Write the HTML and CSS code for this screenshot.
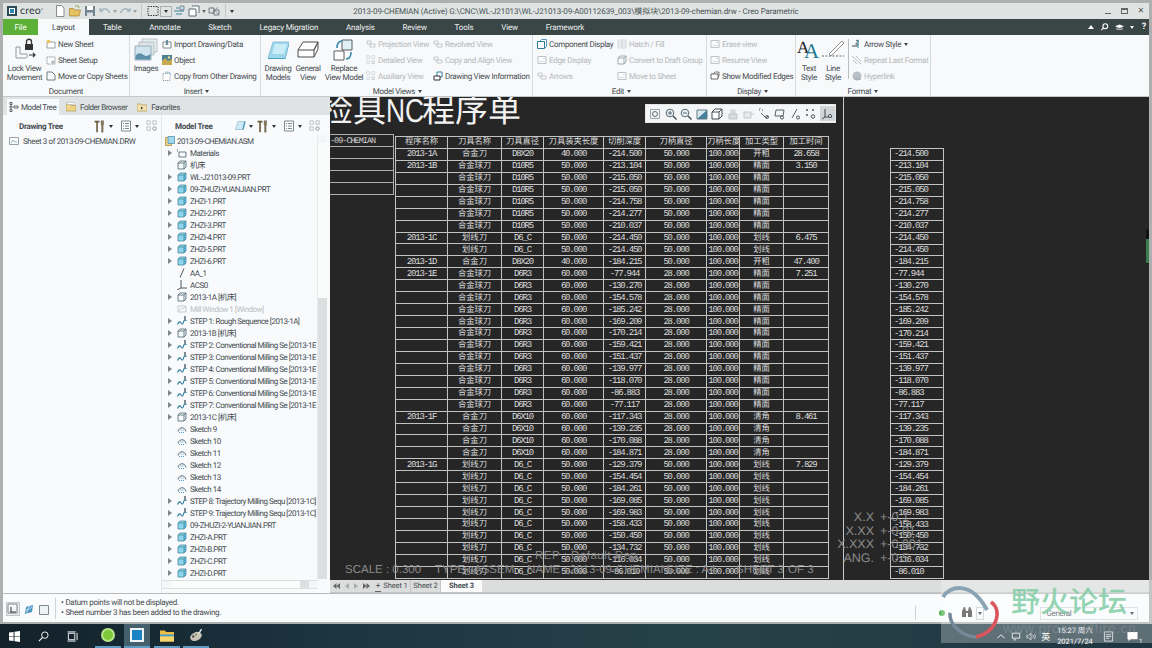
FILE: index.html
```html
<!DOCTYPE html>
<html>
<head>
    <meta charset="UTF-8">
    <meta name="viewport" content="width=device-width, initial-scale=1.0">
    <title>Creo Parametric</title>
    <link rel="stylesheet" href="styles.css">
</head>
<body>
    <svg class="icon-defs" width="0" height="0">
        <symbol id="part" viewBox="0 0 10 10"><path d="M1 3 3 1h6v6L7 9H1z" fill="#8ed4e8" stroke="#4a8ba5" stroke-width=".8"/><path d="M1 3h6v6M7 3l2-2" fill="none" stroke="#3f7f99" stroke-width=".7"/><path d="M7 3.4 8.7 1.8v5L7 8.4z" fill="#4fa6c6"/></symbol>
        <symbol id="box" viewBox="0 0 10 10"><path d="M1 3 3 1h6v6L7 9H1zM1 3h6v6M7 3l2-2" fill="#f7fbfc" stroke="#44606b" stroke-width=".8"/></symbol>
        <symbol id="step" viewBox="0 0 10 10"><path d="M.5 8.5C2 5 3 5.5 4 7s2 1.500 2.500-1 1.500-2 3-1.500" fill="none" stroke="#2f7d9d" stroke-width="1.100"/><path d="M7 0h2v3.500l-1 1-1-1z" fill="#7d8c92"/></symbol>
        <symbol id="sketch" viewBox="0 0 10 10"><path d="M1 7.500C2 2.500 8 2.500 9 7.500" fill="none" stroke="#44606b" stroke-width=".9"/><path d="M2 8.500h6M3.500 6h3" stroke="#3f93b5" stroke-width=".9" stroke-dasharray="1 1"/></symbol>
        <symbol id="tool" viewBox="0 0 16 16"><path d="M2 1h6v2H6v12H4V3H2z" fill="#6b5b3a"/><path d="M10 1h3v5l-.6 1v8h-1.800V7L10 6z" fill="#8a7a4f" stroke="#4c4c4c" stroke-width=".5"/></symbol>
        <symbol id="list" viewBox="0 0 12 12"><path d="M1.500 1h9v10h-9z" fill="#fff" stroke="#7c8a90"/><path d="M3 3.500h1M5 3.500h4M3 6h1M5 6h4M3 8.500h1M5 8.500h4" stroke="#7c8a90"/></symbol>
        <symbol id="show" viewBox="0 0 14 14"><path d="M1 1h4v4H1zM8 1h4v4H8zM1 8h4v4H1z" fill="none" stroke="#b5bbbf"/><circle cx="10" cy="10" r="2" fill="none" stroke="#7f8a90"/></symbol>
        <symbol id="sheet" viewBox="0 0 10 10"><path d="M1 1.500h8v7H1z" fill="#fff" stroke="#7d8a90" stroke-width=".8"/><path d="M2.500 6.500h5M6 3.500h2" stroke="#a8b2b6" stroke-width=".7"/></symbol>
        <symbol id="view" viewBox="0 0 10 10"><path d="M1 2h4v3H1zM4 5h5v3H4z" fill="none" stroke="#8d979c" stroke-width=".8"/></symbol>
    </svg>

    <div class="window">
        <header class="titlebar">
            <div class="qat">
                <div class="creo-logo"><span class="creo-square"></span><span>creo</span><sup>°</sup></div>
                <svg class="qat-ico" viewBox="0 0 10 12"><path d="M1.500 .500h5l2.500 2.500v8.500h-7.500z" fill="#fff" stroke="#8c8c8c"/></svg>
                <svg class="qat-ico" viewBox="0 0 12 12"><path d="M.5 3.500h4l1 1.500h6l-1.500 6H.5z" fill="#e8c260" stroke="#a5832f" stroke-width=".7"/><path d="M6 1.500 9 .5l1 2.500" fill="none" stroke="#9aa55f"/></svg>
                <svg class="qat-ico" viewBox="0 0 12 12"><path d="M1 1h10v10H1z" fill="#71838c"/><path d="M3 1h6v4H3z" fill="#fff"/><path d="M3 7.500h6V11H3z" fill="#d9dfe2"/></svg>
                <svg class="qat-ico dim" viewBox="0 0 12 12"><path d="M1 3v3h3M1.500 6C4 2.500 9 3 10.500 8" fill="none" stroke="#6f8ca0" stroke-width="1.300"/></svg>
                <span class="mini-caret dim"></span>
                <svg class="qat-ico dim" viewBox="0 0 12 12"><path d="M11 3v3H8M10.500 6C8 2.500 3 3 1.500 8" fill="none" stroke="#6f8ca0" stroke-width="1.300"/></svg>
                <span class="mini-caret dim"></span>
                <span class="qat-sep"></span>
                <svg class="qat-ico" viewBox="0 0 12 12"><path d="M1 1.500h10v9H1z" fill="none" stroke="#3d3d3d" stroke-dasharray="1.500 1"/></svg>
                <span class="mini-caret boxed"></span>
                <svg class="qat-ico" viewBox="0 0 12 12"><path d="M1 6h10M3 9h6M3 3h3" stroke="#3a7f9b" stroke-width="1.200"/><path d="M7 1h4v4H7z" fill="#c2dbe5" stroke="#4a5a62" stroke-width=".6"/></svg>
                <svg class="qat-ico" viewBox="0 0 12 12"><path d="M1 4h7v7H1zM4 1h7v7" fill="#fff" stroke="#5c6a70"/></svg>
                <span class="mini-caret"></span>
                <svg class="qat-ico" viewBox="0 0 12 12"><path d="M1 3h5v5H1zM6 5h5v5H6z" fill="none" stroke="#737d82"/><path d="m4 2 6 7M10 2 4 9" stroke="#737d82" stroke-width=".7"/></svg>
                <span class="qat-sep"></span>
                <span class="mini-caret dark"></span>
            </div>
            <div class="doc-title">2013-09-CHEMIAN (Active) G:\CNC\WL-J21013\WL-J21013-09-A00112639_003\模拟块\2013-09-chemian.drw - Creo Parametric</div>
            <div class="win-controls">
                <span class="win-min"></span>
                <span class="win-max"></span>
                <span class="win-close">✕</span>
            </div>
        </header>

        <nav class="ribbon-tabs">
            <a class="tab tab-file">File</a>
            <a class="tab tab-active">Layout</a>
            <a class="tab">Table</a>
            <a class="tab">Annotate</a>
            <a class="tab">Sketch</a>
            <a class="tab">Legacy Migration</a>
            <a class="tab">Analysis</a>
            <a class="tab">Review</a>
            <a class="tab">Tools</a>
            <a class="tab">View</a>
            <a class="tab">Framework</a>
            <div class="tab-tools">
                <span class="up-arrow"></span>
                <svg class="tab-tool" viewBox="0 0 10 10"><circle cx="6" cy="4" r="3" fill="none" stroke="#fff" stroke-width="1.400"/><path d="M4 6 1 9" stroke="#fff" stroke-width="1.400"/></svg>
                <svg class="tab-tool" viewBox="0 0 12 10"><path d="M0 4 6 1.500 12 4 6 6.500z" fill="#fff"/><path d="M2.500 6v2h7V6" fill="none" stroke="#fff"/></svg>
                <span class="mini-caret light"></span>
                <span class="tab-help">?</span>
            </div>
        </nav>

        <section class="ribbon">
            <div class="group group-doc">
                <div class="group-body">
                    <div class="big-btn lock-btn">
                        <svg class="big-ico" viewBox="0 0 24 24"><path d="M3 9v11h10" fill="none" stroke="#8f9aa0"/><path d="M3 9h4v7h7v4" fill="none" stroke="#8f9aa0"/><rect x="12" y="6" width="8" height="6" fill="#333"/><path d="M13.500 6V3.500c0-3 5-3 5 0V6" fill="none" stroke="#333" stroke-width="1.300"/><path d="M16 17h6m-2-2 2 2-2 2" fill="none" stroke="#333" stroke-width="1.200"/></svg>
                        <span>Lock View<br>Movement</span>
                    </div>
                    <ul class="col col-doc">
                        <li><svg class="ico" viewBox="0 0 10 10"><path d="M1 3h8v6H1z" fill="#fff" stroke="#7d8a90" stroke-width=".8"/><circle cx="2.500" cy="2.500" r="1.800" fill="#ebc250"/></svg>New Sheet</li>
                        <li><svg class="ico" viewBox="0 0 10 10"><path d="M1 2h8v7H1z" fill="#fff" stroke="#7d8a90" stroke-width=".8" stroke-dasharray="1.500 .6"/><circle cx="7" cy="7" r="1.600" fill="#aab4b8"/></svg>Sheet Setup</li>
                        <li><svg class="ico" viewBox="0 0 10 10"><path d="M1 1h5l3 3v5H1z" fill="#fff" stroke="#5e6d74" stroke-width=".9"/></svg>Move or Copy Sheets</li>
                    </ul>
                </div>
                <div class="group-label">Document</div>
            </div>

            <div class="group group-insert">
                <div class="group-body">
                    <div class="big-btn images-btn">
                        <svg class="big-ico" viewBox="0 0 24 24"><path d="M8 1h15v13H8z" fill="#e8edf0" stroke="#aeb8bd" stroke-width=".8"/><path d="M5 4h15v13H5z" fill="#dde4e8" stroke="#aeb8bd" stroke-width=".8"/><path d="M1 8h16v14H1z" fill="#cfe4ee" stroke="#8ea0a9" stroke-width=".8"/><path d="M1.500 17.500c4-4 6-2 9 0 2 1 4 0 6-1.500v5.500h-15z" fill="#5d8fa8"/></svg>
                        <span>Images</span>
                    </div>
                    <ul class="col col-insert">
                        <li><svg class="ico" viewBox="0 0 10 10"><path d="M1 3h8v6H1z" fill="#fff" stroke="#5e6d74" stroke-width=".8"/><path d="M4 1h2v4H4zM3 6l2-2 2 2" fill="#6b8d9b"/></svg>Import Drawing/Data</li>
                        <li><svg class="ico" viewBox="0 0 10 10"><path d="M0 0h10v10H0z" fill="#4b7f96"/><path d="M0 10V6l3-3 3 3 4-2v6z" fill="#c7a94e"/><circle cx="7" cy="2.500" r="1.300" fill="#e5d98a"/></svg>Object</li>
                        <li><svg class="ico" viewBox="0 0 10 10"><path d="M1 2.500h7v7H1z" fill="#fff" stroke="#7d8a90" stroke-width=".8" stroke-dasharray="1.200 .8"/><path d="M3 1.200h4l2 2" fill="none" stroke="#7aa9bc" stroke-width=".8"/></svg>Copy from Other Drawing</li>
                    </ul>
                </div>
                <div class="group-label">Insert<i class="caret"></i></div>
            </div>

            <div class="group group-views">
                <div class="group-body">
                    <div class="big-btn models-btn">
                        <svg class="big-ico" viewBox="0 0 24 24"><path d="M7 4h16l-4 16H2z" fill="#9ed8ec"/><path d="M2 20l5-16h16" fill="none" stroke="#7fb7cb" stroke-width=".8"/><path d="M6 16 9 6h12l-3 10z" fill="#c9edf7"/><path d="M19 20l4-16v3l-3.500 14H2v-1z" fill="#49a3c4"/></svg>
                        <span>Drawing<br>Models</span>
                    </div>
                    <div class="big-btn general-btn">
                        <svg class="big-ico" viewBox="0 0 24 24"><path d="M7 4h15l-4 8v7H2v-7zM2 12h16M18 12l4-8v7l-4 8" fill="#fdfdfd" stroke="#4d4d4d" stroke-width="1"/></svg>
                        <span>General<br>View</span>
                    </div>
                    <div class="big-btn replace-btn">
                        <svg class="big-ico" viewBox="0 0 24 24"><path d="M10 2h10v10H10z" fill="#dff1f7" stroke="#4d4d4d" stroke-width=".9"/><path d="M2 13h10v9H2z" fill="#fff" stroke="#4d4d4d" stroke-width=".9"/><path d="M5 10c0-5 2-7 5-7M19 14c0 5-2 7-5 7" fill="none" stroke="#2e88aa" stroke-width="1.600"/></svg>
                        <span>Replace<br>View Model</span>
                    </div>
                    <ul class="col col-views disabled">
                        <li><svg class="ico"><use href="#view"/></svg>Projection View</li>
                        <li><svg class="ico"><use href="#show"/></svg>Detailed View</li>
                        <li><svg class="ico"><use href="#show"/></svg>Auxiliary View</li>
                    </ul>
                    <ul class="col col-views2">
                        <li class="disabled"><svg class="ico"><use href="#view"/></svg>Revolved View</li>
                        <li class="disabled"><svg class="ico"><use href="#view"/></svg>Copy and Align View</li>
                        <li><svg class="ico" viewBox="0 0 10 10"><path d="M4 1h5v5H4z" fill="#fff" stroke="#2f7d9d"/><path d="M1 5h6v4H1z" fill="#fff" stroke="#333"/></svg>Drawing View Information</li>
                    </ul>
                </div>
                <div class="group-label">Model Views<i class="caret"></i></div>
            </div>

            <div class="group group-edit">
                <div class="group-body">
                    <ul class="col col-edit">
                        <li><svg class="ico" viewBox="0 0 10 10"><path d="M.5 2.500h7v7h-7z" fill="#fff" stroke="#2f7d9d"/><path d="M2.500 2.500l2-2h5v7l-2 2" fill="none" stroke="#2f7d9d" stroke-width=".8"/></svg>Component Display</li>
                        <li class="disabled"><svg class="ico"><use href="#sheet"/></svg>Edge Display</li>
                        <li class="disabled"><svg class="ico"><use href="#view"/></svg>Arrows</li>
                    </ul>
                    <ul class="col disabled">
                        <li><svg class="ico" viewBox="0 0 10 10"><path d="M1 1h8v8H1zM1 5h8M5 1v8M1 3h8M1 7h8" fill="none" stroke="#8d979c" stroke-width=".5"/></svg>Hatch / Fill</li>
                        <li><svg class="ico"><use href="#box"/></svg>Convert to Draft Group</li>
                        <li><svg class="ico"><use href="#sheet"/></svg>Move to Sheet</li>
                    </ul>
                </div>
                <div class="group-label">Edit<i class="caret"></i></div>
            </div>

            <div class="group group-display">
                <div class="group-body">
                    <ul class="col">
                        <li class="disabled"><svg class="ico"><use href="#sheet"/></svg>Erase view</li>
                        <li class="disabled"><svg class="ico"><use href="#sheet"/></svg>Resume View</li>
                        <li><svg class="ico" viewBox="0 0 10 10"><path d="M1 3h7v5H1z" fill="#fff" stroke="#444" stroke-width=".8"/><path d="M3 3l2-2h4v4l-1 1" fill="none" stroke="#444" stroke-width=".7"/></svg>Show Modified Edges</li>
                    </ul>
                </div>
                <div class="group-label">Display<i class="caret"></i></div>
            </div>

            <div class="group group-format">
                <div class="group-body">
                    <div class="big-btn textstyle-btn">
                        <div class="aa-ico"><span class="aa-back">A</span><span class="aa-front">A</span></div>
                        <span>Text<br>Style</span>
                    </div>
                    <div class="big-btn linestyle-btn">
                        <svg class="big-ico" viewBox="0 0 24 24"><path d="M1 18h22" stroke="#666" stroke-dasharray="2 1.500"/><path d="M8 16 21 3l2 2L10 18z" fill="#fff" stroke="#777" stroke-width=".8"/></svg>
                        <span>Line<br>Style</span>
                    </div>
                    <span class="format-sep"></span>
                    <ul class="col col-format">
                        <li><svg class="ico" viewBox="0 0 10 10"><path d="M0 7h5M4 2c2-2 3 0 1 1.500S4 7 6.500 5" fill="none" stroke="#3e4a50"/><path d="M6 1v8" stroke="#2f7d9d"/></svg>Arrow Style<i class="caret"></i></li>
                        <li class="disabled"><svg class="ico" viewBox="0 0 10 10"><path d="M0 1 9 9M4 1l5 5M1 5l4 4" stroke="#8d979c"/></svg>Repeat Last Format</li>
                        <li class="disabled"><svg class="ico" viewBox="0 0 10 10"><circle cx="5" cy="5" r="4.500" fill="#8f9aa0"/><path d="M3 8h6" stroke="#666"/></svg>Hyperlink</li>
                    </ul>
                </div>
                <div class="group-label">Format<i class="caret"></i></div>
            </div>
        </section>

        <main class="workspace">
            <aside class="side-panel">
                <div class="panel-tabs">
                    <div class="panel-tab panel-tab-active">
                        <svg class="ico" viewBox="0 0 10 10"><path d="M1 .5h2v2H1zM1 4h2v2H1zM1 7.500h2v2H1zM5 4h4v2H5z" fill="none" stroke="#444" stroke-width=".8"/></svg>Model Tree
                    </div>
                    <div class="panel-tab">
                        <svg class="ico" viewBox="0 0 10 10"><path d="M0 2h4l1 1.500h5V9H0z" fill="#eed389" stroke="#a98c3c" stroke-width=".6"/><path d="M1 .5h7v2H1z" fill="#fff" stroke="#aaa" stroke-width=".5"/></svg>Folder Browser
                    </div>
                    <div class="panel-tab">
                        <svg class="ico" viewBox="0 0 10 10"><path d="M0 2h4l1 1h5v6H0z" fill="#f1e2b0" stroke="#a98c3c" stroke-width=".6"/><path d="m4 4.500 2 1.500-2 1.500z" fill="#333"/></svg>Favorites
                    </div>
                </div>
                <div class="trees">
                    <div class="tree drawing-tree">
                        <div class="tree-head">
                            <b>Drawing Tree</b>
                            <span class="tree-tools">
                                <svg class="tool-ico"><use href="#tool"/></svg><span class="mini-caret dark"></span>
                                <svg class="list-ico"><use href="#list"/></svg><span class="mini-caret dark"></span>
                                <svg class="list-ico"><use href="#show"/></svg>
                            </span>
                        </div>
                        <div class="sheet-row">
                            <svg class="ico" viewBox="0 0 10 10"><path d="M.5 1.500h9v7h-9z" fill="#fff" stroke="#7c8a90" stroke-width=".8"/><path d="M2 7 4 4l2 2h2" fill="none" stroke="#4d97b5" stroke-width=".7"/></svg>Sheet 3 of 2013-09-CHEMIAN.DRW
                        </div>
                    </div>
                    <div class="tree model-tree">
                        <div class="tree-head">
                            <b>Model Tree</b>
                            <span class="tree-tools">
                                <svg class="list-ico" viewBox="0 0 12 12"><path d="M4 1.500h7l-2 8H1.500z" fill="#cfeaf4" stroke="#8fb9c9" stroke-width=".7"/><path d="m9 9.500 2-8" stroke="#3f9abc" stroke-width="1.300"/></svg><span class="mini-caret dark"></span>
                                <svg class="tool-ico"><use href="#tool"/></svg><span class="mini-caret dark"></span>
                                <svg class="list-ico"><use href="#list"/></svg><span class="mini-caret dark"></span>
                                <svg class="list-ico"><use href="#show"/></svg>
                            </span>
                        </div>
                        <div class="tree-scroll">
                            <ul class="tree-list">
                                <li class="root"><svg class="ti" viewBox="0 0 10 10"><path d="M.5 1.500h6v8h-6z" fill="#f0d68c" stroke="#a5853a" stroke-width=".7"/><path d="M3 .5h6.500v7H3z" fill="#9ed8ec" stroke="#4a8ba5" stroke-width=".7"/></svg>2013-09-CHEMIAN.ASM</li>
                                <li class="has-kids"><svg class="ti" viewBox="0 0 10 10"><path d="M1 1C0 2 0 3 .5 4M2 4h7v5H2z" fill="none" stroke="#44606b" stroke-width=".8"/></svg>Materials</li>
                                <li><svg class="ti"><use href="#box"/></svg>机床</li>
                                <li class="has-kids"><svg class="ti"><use href="#part"/></svg>WL-J21013-09.PRT</li>
                                <li class="has-kids"><svg class="ti"><use href="#part"/></svg>09-ZHUZI-YUANJIAN.PRT</li>
                                <li class="has-kids"><svg class="ti"><use href="#part"/></svg>ZHZI-1.PRT</li>
                                <li class="has-kids"><svg class="ti"><use href="#part"/></svg>ZHZI-2.PRT</li>
                                <li class="has-kids"><svg class="ti"><use href="#part"/></svg>ZHZI-3.PRT</li>
                                <li class="has-kids"><svg class="ti"><use href="#part"/></svg>ZHZI-4.PRT</li>
                                <li class="has-kids"><svg class="ti"><use href="#part"/></svg>ZHZI-5.PRT</li>
                                <li class="has-kids"><svg class="ti"><use href="#part"/></svg>ZHZI-6.PRT</li>
                                <li><svg class="ti" viewBox="0 0 10 10"><path d="M3 9.500 7 .5" stroke="#555"/></svg>AA_1</li>
                                <li><svg class="ti" viewBox="0 0 10 10"><path d="M4 0v8L0 10M4 8h6" fill="none" stroke="#444" stroke-width=".9"/></svg>ACS0</li>
                                <li class="has-kids"><svg class="ti"><use href="#box"/></svg>2013-1A [机床]</li>
                                <li class="muted"><svg class="ti" viewBox="0 0 10 10"><path d="M1 2h8v6H1z" fill="none" stroke="#b8c0c4" stroke-width=".8"/><path d="M2 7c2-5 3 0 6-4" fill="none" stroke="#b8c0c4" stroke-width=".8"/></svg>Mill Window 1 [Window]</li>
                                <li class="has-kids"><svg class="ti"><use href="#step"/></svg>STEP 1: Rough Sequence [2013-1A]</li>
                                <li class="has-kids"><svg class="ti"><use href="#box"/></svg>2013-1B [机床]</li>
                                <li class="has-kids"><svg class="ti"><use href="#step"/></svg>STEP 2: Conventional Milling Se [2013-1E</li>
                                <li class="has-kids"><svg class="ti"><use href="#step"/></svg>STEP 3: Conventional Milling Se [2013-1E</li>
                                <li class="has-kids"><svg class="ti"><use href="#step"/></svg>STEP 4: Conventional Milling Se [2013-1E</li>
                                <li class="has-kids"><svg class="ti"><use href="#step"/></svg>STEP 5: Conventional Milling Se [2013-1E</li>
                                <li class="has-kids"><svg class="ti"><use href="#step"/></svg>STEP 6: Conventional Milling Se [2013-1E</li>
                                <li class="has-kids"><svg class="ti"><use href="#step"/></svg>STEP 7: Conventional Milling Se [2013-1E</li>
                                <li class="has-kids"><svg class="ti"><use href="#box"/></svg>2013-1C [机床]</li>
                                <li><svg class="ti"><use href="#sketch"/></svg>Sketch 9</li>
                                <li><svg class="ti"><use href="#sketch"/></svg>Sketch 10</li>
                                <li><svg class="ti"><use href="#sketch"/></svg>Sketch 11</li>
                                <li><svg class="ti"><use href="#sketch"/></svg>Sketch 12</li>
                                <li><svg class="ti"><use href="#sketch"/></svg>Sketch 13</li>
                                <li><svg class="ti"><use href="#sketch"/></svg>Sketch 14</li>
                                <li class="has-kids"><svg class="ti"><use href="#step"/></svg>STEP 8: Trajectory Milling Sequ [2013-1C]</li>
                                <li class="has-kids"><svg class="ti"><use href="#step"/></svg>STEP 9: Trajectory Milling Sequ [2013-1C]</li>
                                <li class="has-kids"><svg class="ti"><use href="#part"/></svg>09-ZHUZI-2-YUANJIAN.PRT</li>
                                <li class="has-kids"><svg class="ti"><use href="#part"/></svg>ZHZI-A.PRT</li>
                                <li class="has-kids"><svg class="ti"><use href="#part"/></svg>ZHZI-B.PRT</li>
                                <li class="has-kids"><svg class="ti"><use href="#part"/></svg>ZHZI-C.PRT</li>
                                <li class="has-kids"><svg class="ti"><use href="#part"/></svg>ZHZI-D.PRT</li>
                            </ul>
                            <div class="vscroll"><span class="sb-up"></span><span class="sb-thumb"></span></div>
                        </div>
                        <div class="hscroll"><span class="sb-left"></span><span class="sb-track"></span><span class="sb-hthumb"></span><span class="sb-right"></span></div>
                    </div>
                </div>
            </aside>

            <div class="drawing-area">
                <div class="canvas">
                    <h1 class="sheet-title">检具<span class="title-latin">NC</span>程序单</h1>

                    <div class="name-block">
                        <div>-09-CHEMIAN</div><div></div><div></div><div></div><div></div>
                    </div>

                    <table class="cad-table tool-table">
                        <colgroup><col class="c1"><col class="c2"><col class="c3"><col class="c4"><col class="c5"><col class="c6"><col class="c7"><col class="c8"><col class="c9"></colgroup>
                        <tr class="head"><td>程序名称</td><td>刀具名称</td><td>刀具直径</td><td>刀具装夹长度</td><td>切削深度</td><td>刀柄直径</td><td>刀柄长度</td><td>加工类型</td><td>加工时间</td></tr>
                        <tr><td>2013-1A</td><td>合金刀</td><td>D8X20</td><td>40.000</td><td>-214.500</td><td>50.000</td><td>100.000</td><td>开粗</td><td>28.658</td></tr>
                        <tr><td>2013-1B</td><td>合金球刀</td><td>D10R5</td><td>50.000</td><td>-213.104</td><td>50.000</td><td>100.000</td><td>精面</td><td>3.150</td></tr>
                        <tr><td></td><td>合金球刀</td><td>D10R5</td><td>50.000</td><td>-215.050</td><td>50.000</td><td>100.000</td><td>精面</td><td></td></tr>
                        <tr><td></td><td>合金球刀</td><td>D10R5</td><td>50.000</td><td>-215.050</td><td>50.000</td><td>100.000</td><td>精面</td><td></td></tr>
                        <tr><td></td><td>合金球刀</td><td>D10R5</td><td>50.000</td><td>-214.758</td><td>50.000</td><td>100.000</td><td>精面</td><td></td></tr>
                        <tr><td></td><td>合金球刀</td><td>D10R5</td><td>50.000</td><td>-214.277</td><td>50.000</td><td>100.000</td><td>精面</td><td></td></tr>
                        <tr><td></td><td>合金球刀</td><td>D10R5</td><td>50.000</td><td>-210.037</td><td>50.000</td><td>100.000</td><td>精面</td><td></td></tr>
                        <tr><td>2013-1C</td><td>划线刀</td><td>D6_C</td><td>50.000</td><td>-214.450</td><td>50.000</td><td>100.000</td><td>划线</td><td>6.475</td></tr>
                        <tr><td></td><td>划线刀</td><td>D6_C</td><td>50.000</td><td>-214.450</td><td>50.000</td><td>100.000</td><td>划线</td><td></td></tr>
                        <tr><td>2013-1D</td><td>合金刀</td><td>D8X20</td><td>40.000</td><td>-184.215</td><td>50.000</td><td>100.000</td><td>开粗</td><td>47.400</td></tr>
                        <tr><td>2013-1E</td><td>合金球刀</td><td>D6R3</td><td>60.000</td><td>-77.944</td><td>28.000</td><td>100.000</td><td>精面</td><td>7.251</td></tr>
                        <tr><td></td><td>合金球刀</td><td>D6R3</td><td>60.000</td><td>-130.270</td><td>28.000</td><td>100.000</td><td>精面</td><td></td></tr>
                        <tr><td></td><td>合金球刀</td><td>D6R3</td><td>60.000</td><td>-154.578</td><td>28.000</td><td>100.000</td><td>精面</td><td></td></tr>
                        <tr><td></td><td>合金球刀</td><td>D6R3</td><td>60.000</td><td>-185.242</td><td>28.000</td><td>100.000</td><td>精面</td><td></td></tr>
                        <tr><td></td><td>合金球刀</td><td>D6R3</td><td>60.000</td><td>-169.209</td><td>28.000</td><td>100.000</td><td>精面</td><td></td></tr>
                        <tr><td></td><td>合金球刀</td><td>D6R3</td><td>60.000</td><td>-170.214</td><td>28.000</td><td>100.000</td><td>精面</td><td></td></tr>
                        <tr><td></td><td>合金球刀</td><td>D6R3</td><td>60.000</td><td>-159.421</td><td>28.000</td><td>100.000</td><td>精面</td><td></td></tr>
                        <tr><td></td><td>合金球刀</td><td>D6R3</td><td>60.000</td><td>-151.437</td><td>28.000</td><td>100.000</td><td>精面</td><td></td></tr>
                        <tr><td></td><td>合金球刀</td><td>D6R3</td><td>60.000</td><td>-139.977</td><td>28.000</td><td>100.000</td><td>精面</td><td></td></tr>
                        <tr><td></td><td>合金球刀</td><td>D6R3</td><td>60.000</td><td>-118.070</td><td>28.000</td><td>100.000</td><td>精面</td><td></td></tr>
                        <tr><td></td><td>合金球刀</td><td>D6R3</td><td>60.000</td><td>-86.883</td><td>28.000</td><td>100.000</td><td>精面</td><td></td></tr>
                        <tr><td></td><td>合金球刀</td><td>D6R3</td><td>60.000</td><td>-77.117</td><td>28.000</td><td>100.000</td><td>精面</td><td></td></tr>
                        <tr><td>2013-1F</td><td>合金刀</td><td>D6X10</td><td>60.000</td><td>-117.343</td><td>28.000</td><td>100.000</td><td>清角</td><td>8.461</td></tr>
                        <tr><td></td><td>合金刀</td><td>D6X10</td><td>60.000</td><td>-139.235</td><td>28.000</td><td>100.000</td><td>清角</td><td></td></tr>
                        <tr><td></td><td>合金刀</td><td>D6X10</td><td>60.000</td><td>-170.088</td><td>28.000</td><td>100.000</td><td>清角</td><td></td></tr>
                        <tr><td></td><td>合金刀</td><td>D6X10</td><td>60.000</td><td>-184.871</td><td>28.000</td><td>100.000</td><td>清角</td><td></td></tr>
                        <tr><td>2013-1G</td><td>划线刀</td><td>D6_C</td><td>50.000</td><td>-129.379</td><td>50.000</td><td>100.000</td><td>划线</td><td>7.829</td></tr>
                        <tr><td></td><td>划线刀</td><td>D6_C</td><td>50.000</td><td>-154.454</td><td>50.000</td><td>100.000</td><td>划线</td><td></td></tr>
                        <tr><td></td><td>划线刀</td><td>D6_C</td><td>50.000</td><td>-184.261</td><td>50.000</td><td>100.000</td><td>划线</td><td></td></tr>
                        <tr><td></td><td>划线刀</td><td>D6_C</td><td>50.000</td><td>-169.085</td><td>50.000</td><td>100.000</td><td>划线</td><td></td></tr>
                        <tr><td></td><td>划线刀</td><td>D6_C</td><td>50.000</td><td>-169.983</td><td>50.000</td><td>100.000</td><td>划线</td><td></td></tr>
                        <tr><td></td><td>划线刀</td><td>D6_C</td><td>50.000</td><td>-158.433</td><td>50.000</td><td>100.000</td><td>划线</td><td></td></tr>
                        <tr><td></td><td>划线刀</td><td>D6_C</td><td>50.000</td><td>-150.450</td><td>50.000</td><td>100.000</td><td>划线</td><td></td></tr>
                        <tr><td></td><td>划线刀</td><td>D6_C</td><td>50.000</td><td>-134.732</td><td>50.000</td><td>100.000</td><td>划线</td><td></td></tr>
                        <tr><td></td><td>划线刀</td><td>D6_C</td><td>50.000</td><td>-116.034</td><td>50.000</td><td>100.000</td><td>划线</td><td></td></tr>
                        <tr><td></td><td>划线刀</td><td>D6_C</td><td>50.000</td><td>-86.010</td><td>50.000</td><td>100.000</td><td>划线</td><td></td></tr>
                    </table>

                    <table class="cad-table depth-table">
                        <tr><td>-214.500</td></tr><tr><td>-213.104</td></tr><tr><td>-215.050</td></tr><tr><td>-215.050</td></tr>
                        <tr><td>-214.758</td></tr><tr><td>-214.277</td></tr><tr><td>-210.037</td></tr><tr><td>-214.450</td></tr>
                        <tr><td>-214.450</td></tr><tr><td>-184.215</td></tr><tr><td>-77.944</td></tr><tr><td>-130.270</td></tr>
                        <tr><td>-154.578</td></tr><tr><td>-185.242</td></tr><tr><td>-169.209</td></tr><tr><td>-170.214</td></tr>
                        <tr><td>-159.421</td></tr><tr><td>-151.437</td></tr><tr><td>-139.977</td></tr><tr><td>-118.070</td></tr>
                        <tr><td>-86.883</td></tr><tr><td>-77.117</td></tr><tr><td>-117.343</td></tr><tr><td>-139.235</td></tr>
                        <tr><td>-170.088</td></tr><tr><td>-184.871</td></tr><tr><td>-129.379</td></tr><tr><td>-154.454</td></tr>
                        <tr><td>-184.261</td></tr><tr><td>-169.085</td></tr><tr><td>-169.983</td></tr><tr><td>-158.433</td></tr>
                        <tr><td>-150.450</td></tr><tr><td>-134.732</td></tr><tr><td>-116.034</td></tr><tr><td>-86.010</td></tr>
                    </table>

                    <span class="sheet-edge"></span>

                    <div class="sheet-rep">REP : Default Rep</div>
                    <div class="sheet-info">
                        <span class="si-scale">SCALE : 0.300</span>
                        <span class="si-type">TYPE : ASSEM</span>
                        <span class="si-name">NAME : 2013-09-CHEMIAN</span>
                        <span class="si-size">SIZE : A4</span>
                        <span class="si-sheet">SHEET 3</span>
                        <span>OF 3</span>
                    </div>
                    <div class="tolerances">
                        <div><span>X.X</span><span>+-0.1</span></div>
                        <div><span>X.XX</span><span>+-0.01</span></div>
                        <div><span>X.XXX</span><span>+-0.001</span></div>
                        <div><span>ANG.</span><span>+-0.5</span></div>
                    </div>

                    <div class="view-toolbar">
                        <svg class="vt" viewBox="0 0 12 12"><path d="M1.500 1.500h9v9h-9z" fill="#f2f4f5" stroke="#9aa5aa"/><circle cx="6" cy="6" r="2.500" fill="none" stroke="#5a6a72"/></svg>
                        <svg class="vt" viewBox="0 0 12 12"><circle cx="5" cy="5" r="3.800" fill="#e4f0f5" stroke="#5a6a72"/><path d="m8 8 3.500 3.500" stroke="#3e4a50" stroke-width="1.400"/><path d="M3 5h4M5 3v4" stroke="#5a6a72"/></svg>
                        <svg class="vt" viewBox="0 0 12 12"><circle cx="5" cy="5" r="3.800" fill="#e4f0f5" stroke="#5a6a72"/><path d="m8 8 3.500 3.500" stroke="#3e4a50" stroke-width="1.400"/><path d="M3 5h4" stroke="#5a6a72"/></svg>
                        <svg class="vt" viewBox="0 0 12 12"><path d="M1 2h10v9H1z" fill="#d5e9f1" stroke="#6c7a80"/><path d="M1 11 11 2v9z" fill="#497f98"/></svg>
                        <svg class="vt" viewBox="0 0 12 12"><path d="M1 4h7v7H1zM1 4l3-3h7v7l-3 3M8 4l3-3" fill="#fff" stroke="#3e4a50"/></svg>
                        <svg class="vt faded" viewBox="0 0 12 12"><circle cx="6" cy="4" r="3" fill="#c5ccd0"/><path d="M2 6h8v5H2z" fill="#c5ccd0" stroke="#9aa5aa"/></svg>
                        <svg class="vt faded" viewBox="0 0 12 12"><path d="M1 4h7v6H1z" fill="#dde2e4" stroke="#a5aeb2"/><path d="M8 6h3" stroke="#a5aeb2"/></svg>
                        <svg class="vt" viewBox="0 0 12 12"><path d="M1 2h1M4 2h1M2 0v1M8 10l2-2M3 5l5 5" stroke="#55636a"/><circle cx="9" cy="9" r="1.500" fill="none" stroke="#55636a"/></svg>
                        <svg class="vt" viewBox="0 0 12 12"><path d="M2 2h8l-1 6H1z" fill="none" stroke="#55636a"/><circle cx="8" cy="9.500" r="1.500" fill="#fff" stroke="#3e4a50"/></svg>
                        <svg class="vt" viewBox="0 0 12 12"><path d="M3 10 8 1" stroke="#55636a"/><circle cx="9" cy="9.500" r="1.500" fill="#fff" stroke="#3e4a50"/></svg>
                        <svg class="vt" viewBox="0 0 12 12"><path d="M1 1l2 2M3 1 1 3M7 1l2 2M9 1 7 3M1 6l2 2M3 6 1 8" stroke="#55636a" stroke-width=".8"/><circle cx="8" cy="8.500" r="1.700" fill="#fff" stroke="#3e4a50"/></svg>
                        <span class="vt-active"><svg class="vt" viewBox="0 0 12 12"><path d="M4 1v8L1 11M4 9h7" fill="none" stroke="#3e4a50"/><circle cx="9" cy="8" r="1.500" fill="#fff" stroke="#3e4a50"/></svg></span>
                    </div>

                    <div class="status-led"><span></span></div>
                </div>

                <div class="sheet-tabs">
                    <div class="sheet-nav">
                        <svg class="nav-ico" viewBox="0 0 7 6"><path d="M3.500 0v6L0 3zM7 0v6L3.500 3z" fill="#666"/></svg>
                        <svg class="nav-ico one" viewBox="0 0 4 6"><path d="M4 0v6L0 3z" fill="#aaa"/></svg>
                        <svg class="nav-ico one" viewBox="0 0 4 6"><path d="M0 0v6l4-3z" fill="#aaa"/></svg>
                        <svg class="nav-ico" viewBox="0 0 7 6"><path d="M0 0v6l3.500-3zM3.500 0v6L7 3z" fill="#666"/></svg>
                    </div>
                    <span class="sheet-add">+</span>
                    <span class="sheet-tab">Sheet 1</span>
                    <span class="sheet-tab">Sheet 2</span>
                    <span class="sheet-tab sheet-tab-active">Sheet 3</span>
                </div>
            </div>
        </main>

        <footer class="statusbar">
            <div class="status-icons">
                <span class="si-active"><svg class="ico-12" viewBox="0 0 12 12"><path d="M1 1h9v9H1z" fill="#f5f6f7" stroke="#7d8a90"/><path d="M3 9h6M4 4v5" stroke="#333"/></svg></span>
                <svg class="ico-12" viewBox="0 0 12 12"><path d="M2 10 3 3l7-2-1 7z" fill="#4d97c4"/><path d="M3 6c2 0 4-1 6-3M4 9c0-3 1-5 3-7" fill="none" stroke="#d9eef7" stroke-width=".8"/></svg>
                <svg class="ico-12" viewBox="0 0 12 12"><path d="M1.500 1.500h9v9h-9z" fill="#f0f3f5" stroke="#7d8a90"/></svg>
            </div>
            <ul class="messages">
                <li>Datum points will not be displayed.</li>
                <li>Sheet number 3 has been added to the drawing.</li>
            </ul>
            <div class="status-right">
                <span class="status-sep"></span>
                <span class="green-dot"></span>
                <span class="dot-dim">•</span>
                <span class="find-btn"><svg class="ico-12" viewBox="0 0 12 12"><path d="M1 11V5l2-4h1l1 4h2l1-4h1l2 4v6H7V7H5v4z" fill="#444"/></svg></span>
                <span class="find-drop"><span class="mini-caret dark"></span></span>
                <div class="combo"><span>General</span><span class="mini-caret dark"></span></div>
            </div>
        </footer>
    </div>

    <div class="taskbar">
        <div class="task-left">
            <svg class="task-ico win-logo" viewBox="0 0 12 12"><path d="M0 1.700 5 1v4.600H0zM6 .9 12 0v5.600H6zM0 6.400h5V11L0 10.300zM6 6.400h6V12l-6-.9z" fill="#fff"/></svg>
            <svg class="task-ico search-ico" viewBox="0 0 12 12"><circle cx="7.500" cy="4.500" r="3.500" fill="none" stroke="#fff"/><path d="M5 7 1 11" stroke="#fff" stroke-width="1.200"/></svg>
            <svg class="task-ico view-ico" viewBox="0 0 12 12"><path d="M1.500 2.500h7v7h-7z" fill="none" stroke="#fff"/><path d="M.5 1h9M.5 11h9M11 2v8" stroke="#fff"/></svg>
            <span class="app-slot app-green"><span class="green-ball"></span></span>
            <span class="app-slot app-creo"><span class="creo-tile"><i></i></span></span>
            <span class="app-slot app-files"><svg class="file-ico" viewBox="0 0 14 12"><path d="M0 1h5l1 1.500h8V12H0z" fill="#edbe45"/><path d="M0 5h14v2H0z" fill="#3d9bd4"/><path d="M0 7h14v5H0z" fill="#f6d66c"/></svg></span>
            <span class="app-slot app-paint"><svg class="file-ico" viewBox="0 0 14 14"><ellipse cx="7" cy="8" rx="6.500" ry="4.500" fill="#c9c4b5" transform="rotate(-25 7 8)"/><circle cx="4" cy="8" r="1.300" fill="#4e4e4e"/><circle cx="7" cy="6" r="1" fill="#6e7a4a"/><path d="m10 5 3-5" stroke="#e6e6e6" stroke-width="1.500"/></svg></span>
        </div>
        <div class="tray">
            <svg class="tray-ico" viewBox="0 0 10 10"><path d="m1 7 4-4 4 4" fill="none" stroke="#fff"/></svg>
            <svg class="tray-ico" viewBox="0 0 12 10"><path d="M1.500 1h9v6h-9zM3 9h3" fill="none" stroke="#fff"/></svg>
            <svg class="tray-ico" viewBox="0 0 12 10"><path d="M1 3.500h2L6 1v8L3 6.500H1z" fill="none" stroke="#fff" stroke-width=".8"/><path d="M8 3c1 1 1 3 0 4M10 2c1.500 2 1.500 4 0 6" fill="none" stroke="#fff" stroke-width=".8"/></svg>
            <span class="ime">英</span>
            <div class="clock"><div>15:27 周六</div><div>2021/7/24</div></div>
            <svg class="tray-note" viewBox="0 0 12 12"><path d="M1.500 1h9v10h-9zM3 4h6M3 6h6M3 8h4" fill="none" stroke="#fff" stroke-width=".8"/></svg>
            <div class="tray-msg"><svg class="tray-note" viewBox="0 0 12 12"><path d="M.5 1h11v8H4L1.500 11V9h-1z" fill="#fff"/></svg><span class="msg-badge">1</span></div>
        </div>
    </div>

    <div class="watermark">
        <svg class="wm-logo" viewBox="0 0 60 60"><path d="M2 17C8 6 30 0 46 30" fill="none" stroke="#8aa4b4" stroke-width="4"/><path d="M50 22C62 30 56 52 35 57" fill="none" stroke="#d9565c" stroke-width="3.500"/><path d="M9 33C8 44 20 56 35 57" fill="none" stroke="#76899a" stroke-width="3.500"/></svg>
        <div class="wm-text">野火论坛</div>
        <div class="wm-url">www.proewildfire.cn</div>
    </div>
</body>
</html>
```

FILE: styles.css
```css
* {
    box-sizing: border-box;
}
html, body {
    margin: 0;
    padding: 0;
}
body {
    width: 1152px;
    height: 648px;
    overflow: hidden;
    position: relative;
    background-color: #aeb0b0;
    font-family: Roboto, "Noto Sans CJK SC", sans-serif;
    font-size: 8px;
    letter-spacing: -.3px;
    text-rendering: geometricPrecision;
    color: #454c50;
}
ul {
    list-style: none;
    margin: 0;
    padding: 0;
}
.icon-defs {
    position: absolute;
}

/* window */
.window {
    height: 622px;
    padding: 3px 3px 0;
    display: flex;
    flex-direction: column;
}
.titlebar {
    height: 16px;
    flex: none;
    background-color: #dfe4e3;
    display: grid;
    grid-template-columns: 1fr auto 1fr;
    align-items: center;
}
.qat {
    display: flex;
    align-items: center;
    gap: 1px;
    padding-left: 4px;
}
.creo-logo {
    display: flex;
    align-items: center;
    font-family: "Lato", sans-serif;
    font-size: 10.5px;
    color: #2e3a40;
    letter-spacing: .2px;
    width: 45px;
    gap: 3px;
}
.creo-logo sup {
    font-size: 5px;
    margin-left: -3px;
}
.creo-square {
    width: 10px;
    height: 10px;
    border: 2px solid #2e4a5a;
    box-shadow: inset 0 0 0 1px #fff;
    background-color: #2a86b0;
}
.qat-ico {
    width: 12px;
    height: 12px;
    margin: 0 1px;
}
.qat-ico.dim, .mini-caret.dim {
    opacity: .55;
}
.qat-sep {
    width: 1px;
    height: 14px;
    background-color: #c3c9c9;
    margin: 0 3px;
}
.mini-caret {
    display: inline-block;
    width: 0;
    height: 0;
    border-left: 2.500px solid transparent;
    border-right: 2.500px solid transparent;
    border-top: 3px solid #5f6a6f;
    flex: none;
}
.mini-caret.dark {
    border-top-color: #333;
}
.mini-caret.light {
    border-top-color: #fff;
}
.mini-caret.boxed {
    outline: 1px solid #aab0b0;
    outline-offset: 3px;
    margin: 0 3px;
    border-top-color: #333;
}
.doc-title {
    font-size: 8px;
    letter-spacing: -.1px;
    color: #4a5357;
    white-space: nowrap;
}
.win-controls {
    display: flex;
    justify-content: flex-end;
    align-items: center;
    gap: 10px;
    padding-right: 5px;
    color: #555;
}
.win-min {
    width: 6px;
    height: 1px;
    background-color: #666;
    margin-top: 4px;
}
.win-max {
    width: 7px;
    height: 6px;
    border: 1px solid #666;
    border-top-width: 2px;
}
.win-close {
    font-size: 8px;
    line-height: 1;
}

/* ribbon */
.ribbon-tabs {
    height: 16px;
    flex: none;
    background-color: #3a4545;
    display: flex;
    align-items: center;
    color: #eef1f1;
    font-size: 8px;
    letter-spacing: -.15px;
}
.tab {
    height: 100%;
    padding: 0 13.900px;
    display: flex;
    align-items: center;
    white-space: nowrap;
}
.tab-file {
    width: 35px;
    padding: 0;
    justify-content: center;
    background-color: #5cb038;
    color: #fff;
}
.tab-active {
    width: 51px;
    padding: 0;
    justify-content: center;
    background-color: #f8f9fb;
    color: #3d4448;
}
.tab-tools {
    margin-left: auto;
    display: flex;
    align-items: center;
    gap: 6px;
    padding-right: 3px;
}
.tab-tool {
    width: 9px;
    height: 8px;
}
.up-arrow {
    width: 0;
    height: 0;
    border-left: 3px solid transparent;
    border-right: 3px solid transparent;
    border-bottom: 4px solid #fff;
}
.tab-help {
    font-weight: 700;
    color: #fff;
    font-size: 9px;
    margin-left: 2px;
}
.ribbon {
    height: 62px;
    flex: none;
    display: flex;
    background-color: #f8f9fb;
    border-bottom: 1px solid #c4c7c7;
}
.group {
    display: flex;
    flex-direction: column;
    border-right: 1px solid #d8dbdc;
    flex: none;
}
.group-doc { width: 127px; }
.group-insert { width: 131px; padding-left: 3px; }
.group-views { width: 272px; padding-left: 2px; }
.group-edit { width: 174px; padding-left: 4px; }
.group-display { width: 89px; padding-left: 3px; }
.group-format { width: 135px; }
.group-body {
    flex: 1;
    display: flex;
    padding-top: 1px;
    min-height: 0;
}
.group-label {
    height: 11px;
    padding-top: 2px;
    display: flex;
    align-items: center;
    justify-content: center;
    color: #444b4f;
}
.caret {
    display: inline-block;
    border-left: 2.500px solid transparent;
    border-right: 2.500px solid transparent;
    border-top: 3px solid #444;
    margin-left: 3px;
}
.big-btn {
    display: flex;
    flex-direction: column;
    align-items: center;
    line-height: 9px;
    text-align: center;
    white-space: nowrap;
    flex: none;
}
.big-ico {
    width: 24px;
    height: 24px;
    margin: 2px 0;
}
.lock-btn { width: 43px; }
.images-btn { width: 26px; margin-right: 3px; }
.models-btn { width: 30px; margin-right: 3px; }
.general-btn { width: 24px; margin-right: 5px; }
.replace-btn { width: 38px; margin-right: 3px; }
.textstyle-btn { width: 24px; margin-left: 1px; }
.linestyle-btn { width: 24px; }
.col li {
    height: 16px;
    display: flex;
    align-items: center;
    white-space: nowrap;
}
.col .ico, .col li > svg {
    margin-right: 2px;
}
.ico {
    width: 10px;
    height: 10px;
    flex: none;
}
.disabled, .disabled li {
    color: #b3b8bb;
}
.disabled svg {
    opacity: .6;
}
.col-views { width: 67px; }
.col-edit { width: 80px; }
.aa-ico {
    position: relative;
    width: 24px;
    height: 28px;
    font-family: "Liberation Serif", serif;
    font-size: 21px;
    line-height: 24px;
}
.aa-back {
    position: absolute;
    left: 0;
    top: 0;
    color: #222;
    font-size: 17px;
}
.aa-front {
    position: absolute;
    left: 7px;
    top: 3px;
    color: #1e7a92;
}
.format-sep {
    width: 1px;
    height: 40px;
    margin: 3px 3px 0 3px;
    background-color: #b9bec0;
    flex: none;
}

/* main area */
.workspace {
    height: 496px;
    flex: none;
    display: flex;
}
.side-panel {
    width: 327px;
    flex: none;
    display: flex;
    flex-direction: column;
    background-color: #f8fafc;
}
.panel-tabs {
    height: 18px;
    flex: none;
    display: flex;
    align-items: flex-end;
    background-color: #dfe3e3;
    padding-left: 4px;
    white-space: nowrap;
    letter-spacing: -.45px;
}
.panel-tab {
    height: 16px;
    display: flex;
    align-items: center;
    gap: 4px;
    padding: 0 5px 0 3px;
    margin-right: 2px;
}
.panel-tab-active {
    background-color: #f8fafc;
    width: 52px;
    gap: 2px;
    padding-left: 2px;
    margin-right: 4px;
}
.trees {
    flex: 1;
    display: flex;
    min-height: 0;
}
.tree-head {
    height: 20px;
    flex: none;
    display: flex;
    align-items: center;
    justify-content: space-between;
    padding: 2px 3px 0 16px;
}
.tree-tools {
    display: flex;
    align-items: center;
    gap: 3px;
}
.tool-ico {
    width: 13px;
    height: 13px;
}
.list-ico {
    width: 12px;
    height: 12px;
    margin-left: 4px;
}
.drawing-tree {
    width: 159px;
    flex: none;
    border-right: 1px solid #e4e6e8;
}
.sheet-row {
    display: flex;
    align-items: center;
    gap: 4px;
    height: 12px;
    padding-left: 6px;
    white-space: nowrap;
    letter-spacing: -.4px;
}
.model-tree {
    flex: 1;
    min-width: 0;
    display: flex;
    flex-direction: column;
}
.model-tree .tree-head {
    padding-left: 13px;
    padding-right: 9px;
}
.tree-scroll {
    height: 444px;
    flex: none;
    display: flex;
}
.tree-list {
    width: 155px;
    flex: none;
    overflow: hidden;
    letter-spacing: -.5px;
}
.tree-list li {
    height: 12px;
    display: flex;
    align-items: center;
    white-space: nowrap;
    padding-left: 15px;
    position: relative;
}
.tree-list .root {
    padding-left: 3px;
}
.has-kids::before {
    content: "";
    position: absolute;
    left: 6px;
    top: 3px;
    border-top: 3px solid transparent;
    border-bottom: 3px solid transparent;
    border-left: 4px solid #7e878b;
}
.tree-list .muted {
    color: #b9bfc2;
}
.ti {
    width: 10px;
    height: 10px;
    margin-right: 3px;
    flex: none;
}
.root .ti {
    margin-right: 2px;
}
.vscroll {
    width: 10px;
    display: flex;
    flex-direction: column;
    background-color: #dcdedf;
    border-left: 1px solid #e7e9ea;
}
.sb-up {
    height: 8px;
    background-color: #f4f6f7;
}
.sb-thumb {
    height: 155px;
    background-color: #fbfcfc;
}
.hscroll {
    height: 9px;
    margin-top: 1px;
    display: flex;
    align-items: stretch;
    width: 156px;
    border: 1px solid #dcdfe0;
    border-width: 1px 0;
    background-color: #fbfcfc;
}
.sb-left, .sb-right {
    width: 9px;
    flex: none;
    background-color: #f4f6f7;
}
.sb-track {
    flex: 1;
}
.sb-hthumb {
    width: 9px;
    background-color: #dcdedf;
}

.drawing-area {
    flex: 1;
    min-width: 0;
    display: flex;
    flex-direction: column;
}
.canvas {
    height: 483px;
    flex: none;
    position: relative;
    overflow: hidden;
    background-color: #262626;
}
.sheet-title {
    position: absolute;
    left: -10px;
    top: -11px;
    margin: 0;
    font-family: "Noto Sans CJK SC", sans-serif;
    font-weight: 400;
    font-size: 33px;
    line-height: 44px;
    letter-spacing: 0;
    color: #f2f2f2;
    white-space: nowrap;
}
.title-latin {
    font-family: "Liberation Sans", sans-serif;
    display: inline-block;
    font-size: 33px;
    width: 36px;
    transform: scaleX(.8);
    transform-origin: left;
}
.name-block {
    position: absolute;
    left: -4px;
    top: 37px;
    width: 68px;
    border: 1px solid #aeaeae;
    border-width: 1px 1px 0 0;
    color: #d5d5d5;
}
.name-block div {
    height: 12px;
    border-bottom: 1px solid #aeaeae;
    font-family: "Liberation Mono", monospace;
    font-size: 8.5px;
    line-height: 13px;
    letter-spacing: -1px;
    padding-left: 4px;
    white-space: nowrap;
}
.cad-table {
    border-collapse: collapse;
    table-layout: fixed;
    color: #dcdcdc;
    font-family: "Liberation Mono", "Noto Sans CJK SC", monospace;
    font-size: 9px;
    letter-spacing: -1.200px;
}
.cad-table td {
    height: 11.950px;
    padding: 1px 0 0;
    border: 1px solid #c3c3c3;
    text-align: center;
    white-space: nowrap;
    overflow: hidden;
    line-height: 9px;
}
.tool-table {
    position: absolute;
    left: 65px;
    top: 39px;
    width: 433px;
}
.tool-table .c1 { width: 52px; }
.tool-table .c2 { width: 54px; }
.tool-table .c3 { width: 42px; }
.tool-table .c4 { width: 60px; }
.tool-table .c5 { width: 42px; }
.tool-table .c6 { width: 61px; }
.tool-table .c7 { width: 33px; }
.tool-table .c8 { width: 44px; }
.tool-table .c9 { width: 45px; }
.tool-table td:nth-child(2), .tool-table td:nth-child(8), .tool-table .head td {
    font-family: "Noto Sans CJK SC", sans-serif;
    letter-spacing: 0;
    font-size: 8.3px;
    padding: 0 0 1px;
}
.tool-table .head td:nth-child(5) {
    letter-spacing: -.1px;
}
.depth-table {
    position: absolute;
    left: 560px;
    top: 51px;
    width: 54px;
}
.depth-table td {
    text-align: left;
    padding-left: 3px;
}
.sheet-edge {
    position: absolute;
    left: 513px;
    top: 0;
    bottom: 0;
    width: 1px;
    background-color: #c9c9c9;
}
.sheet-rep {
    position: absolute;
    left: 205px;
    top: 453px;
    font-family: "Liberation Sans", sans-serif;
    font-size: 11.5px;
    color: #848484;
    white-space: nowrap;
    letter-spacing: .5px;
}
.sheet-info {
    position: absolute;
    left: 15px;
    top: 467px;
    display: flex;
    font-family: "Liberation Sans", sans-serif;
    font-size: 11.5px;
    letter-spacing: 0;
    color: #8c8c8c;
    white-space: nowrap;
}
.si-scale { width: 90px; }
.si-type { width: 92px; }
.si-name { width: 140px; }
.si-size { width: 69px; }
.si-sheet { width: 52px; }
.tolerances {
    position: absolute;
    right: 221px;
    top: 414px;
    width: 98px;
    font-family: "Liberation Sans", sans-serif;
    font-size: 12.500px;
    letter-spacing: 0;
    color: #8c8c8c;
}
.tolerances div {
    height: 13.500px;
    line-height: 13.500px;
    display: grid;
    grid-template-columns: 50px auto;
    white-space: nowrap;
}
.tolerances div span:first-child {
    text-align: right;
    padding-right: 6px;
}
.view-toolbar {
    position: absolute;
    left: 315px;
    top: 7px;
    width: 191px;
    height: 19px;
    background-color: #f4f6f7;
    border: 1px solid #e4e6e7;
    display: flex;
    align-items: center;
    gap: 3.600px;
    padding-left: 3px;
}
.vt {
    width: 12px;
    height: 12px;
    flex: none;
}
.vt.faded {
    opacity: .6;
}
.vt-active {
    display: flex;
    align-items: center;
    justify-content: center;
    width: 15px;
    height: 15px;
    background-color: #d1d5d7;
    margin-left: -1px;
}
.status-led {
    position: absolute;
    right: 0;
    top: 132px;
    width: 3px;
    height: 35px;
    background-color: #111;
    border-radius: 2px;
    overflow: hidden;
}
.status-led span {
    display: block;
    margin-top: 10px;
    height: 24px;
    background-color: #3a7d50;
}
.sheet-tabs {
    height: 13px;
    flex: none;
    display: flex;
    align-items: stretch;
    background-color: #dcdddd;
    border-bottom: 1px solid #c6c6c6;
    font-size: 7.500px;
    letter-spacing: -.1px;
}
.sheet-nav {
    display: flex;
    align-items: center;
    gap: 5px;
    width: 45px;
    padding-left: 3px;
}
.nav-ico {
    width: 7px;
    height: 6px;
}
.nav-ico.one {
    width: 4px;
}
.sheet-add {
    width: 6px;
    text-align: center;
    line-height: 11px;
    border-bottom: 1px solid #666;
    font-size: 8px;
}
.sheet-tab {
    width: 30px;
    text-align: center;
    line-height: 12px;
    background-color: #dcdddd;
    border-right: 1px solid #c6c6c6;
    white-space: nowrap;
}
.sheet-tab-active {
    width: 41px;
    background-color: #fbfbfb;
    font-weight: 700;
    border: none;
}

/* status bar */
.statusbar {
    flex: 1;
    min-height: 0;
    display: flex;
    align-items: stretch;
    background-color: #fafbfc;
    border-top: 1px solid #b9bcbc;
}
.status-icons {
    display: flex;
    align-items: flex-end;
    gap: 3px;
    padding: 0 0 3px 3px;
    width: 53px;
    border-right: 1px solid #d0d3d4;
    margin: 4px 0 3px;
}
.si-active {
    width: 14px;
    height: 14px;
    border: 1px solid #c2c7c9;
    background-color: #e7e9ea;
    display: flex;
    align-items: center;
    justify-content: center;
}
.ico-12 {
    width: 12px;
    height: 12px;
    flex: none;
}
.messages {
    padding: 4px 0 0 5px;
    line-height: 10px;
    width: 300px;
}
.messages li::before {
    content: "•";
    margin-right: 2px;
    color: #333;
}
.status-right {
    flex: 1;
    display: flex;
    align-items: center;
    padding-top: 10px;
    padding-left: 559px;
    white-space: nowrap;
}
.status-sep {
    width: 1px;
    height: 14px;
    background-color: #cfd2d3;
    margin-right: 23px;
}
.green-dot {
    width: 6px;
    height: 6px;
    border-radius: 50%;
    background-color: #4db34f;
}
.dot-dim {
    color: #aaa;
    margin: 0 8px 0 3px;
}
.find-btn {
    width: 18px;
    height: 14px;
    display: flex;
    justify-content: center;
}
.find-drop {
    width: 8px;
    height: 13px;
    border: 1px solid #c9cccd;
    display: flex;
    align-items: center;
    justify-content: center;
}
.combo {
    margin-left: 56px;
    width: 98px;
    height: 13px;
    display: flex;
    align-items: center;
    justify-content: space-between;
    padding: 0 3px 0 5px;
    border: 1px solid #d5d8d9;
}

/* windows taskbar */
.taskbar {
    position: absolute;
    left: 0;
    right: 0;
    bottom: 0;
    height: 24px;
    display: flex;
    justify-content: space-between;
    background: linear-gradient(90deg, #13212a 0%, #1c3540 30%, #274149 60%, #1f3640 100%);
    color: #fff;
}
.task-left {
    display: flex;
    align-items: center;
}
.task-ico {
    width: 11px;
    height: 11px;
}
.win-logo { margin: 0 0 0 9px; }
.search-ico { margin-left: 18px; }
.view-ico { margin-left: 18px; }
.app-slot {
    width: 26px;
    height: 100%;
    display: flex;
    align-items: center;
    justify-content: center;
    border-bottom: 2px solid #5f9dc4;
    margin-right: 3px;
}
.app-green { margin-left: 17px; margin-right: 3px; }
.app-creo {
    background-color: #45606d;
    margin-right: 4px;
}
.green-ball {
    width: 14px;
    height: 14px;
    border-radius: 50%;
    background-color: #7fc73b;
    border: 2px solid #b7e58a;
}
.creo-tile {
    width: 14px;
    height: 14px;
    background-color: #f1f4f6;
    padding: 2px;
}
.creo-tile i {
    display: block;
    width: 10px;
    height: 10px;
    background-color: #1c84c4;
}
.file-ico {
    width: 14px;
    height: 13px;
}
.tray {
    display: flex;
    align-items: center;
    gap: 5px;
    padding-right: 14px;
}
.tray-ico {
    width: 10px;
    height: 9px;
}
.ime {
    font-size: 9px;
}
.clock {
    width: 36px;
    font-size: 7.500px;
    letter-spacing: 0;
    line-height: 11px;
    text-align: center;
    margin-left: 2px;
    margin-right: 5px;
    white-space: nowrap;
}
.tray-note {
    width: 11px;
    height: 11px;
}
.tray-msg {
    position: relative;
    margin-left: 8px;
    display: flex;
}
.msg-badge {
    position: absolute;
    right: -4px;
    bottom: -3px;
    font-size: 6px;
    color: #fff;
}

/* forum watermark over the bottom right corner */
.watermark {
    position: absolute;
    left: 941px;
    top: 580px;
    width: 211px;
    height: 63px;
    background-color: rgba(255, 255, 255, .28);
    pointer-events: none;
}
.wm-logo {
    position: absolute;
    left: 0;
    top: 0;
    width: 60px;
    height: 60px;
}
.wm-text {
    position: absolute;
    left: 70px;
    top: 2px;
    font-family: "Noto Sans CJK SC", sans-serif;
    font-weight: 500;
    font-size: 29px;
    line-height: 36px;
    letter-spacing: 0;
    color: rgba(130, 205, 165, .85);
    white-space: nowrap;
}
.wm-url {
    position: absolute;
    left: 62px;
    top: 40px;
    font-family: "Liberation Sans", sans-serif;
    font-size: 14px;
    color: rgba(150, 165, 172, .4);
    white-space: nowrap;
    letter-spacing: .5px;
}
```
